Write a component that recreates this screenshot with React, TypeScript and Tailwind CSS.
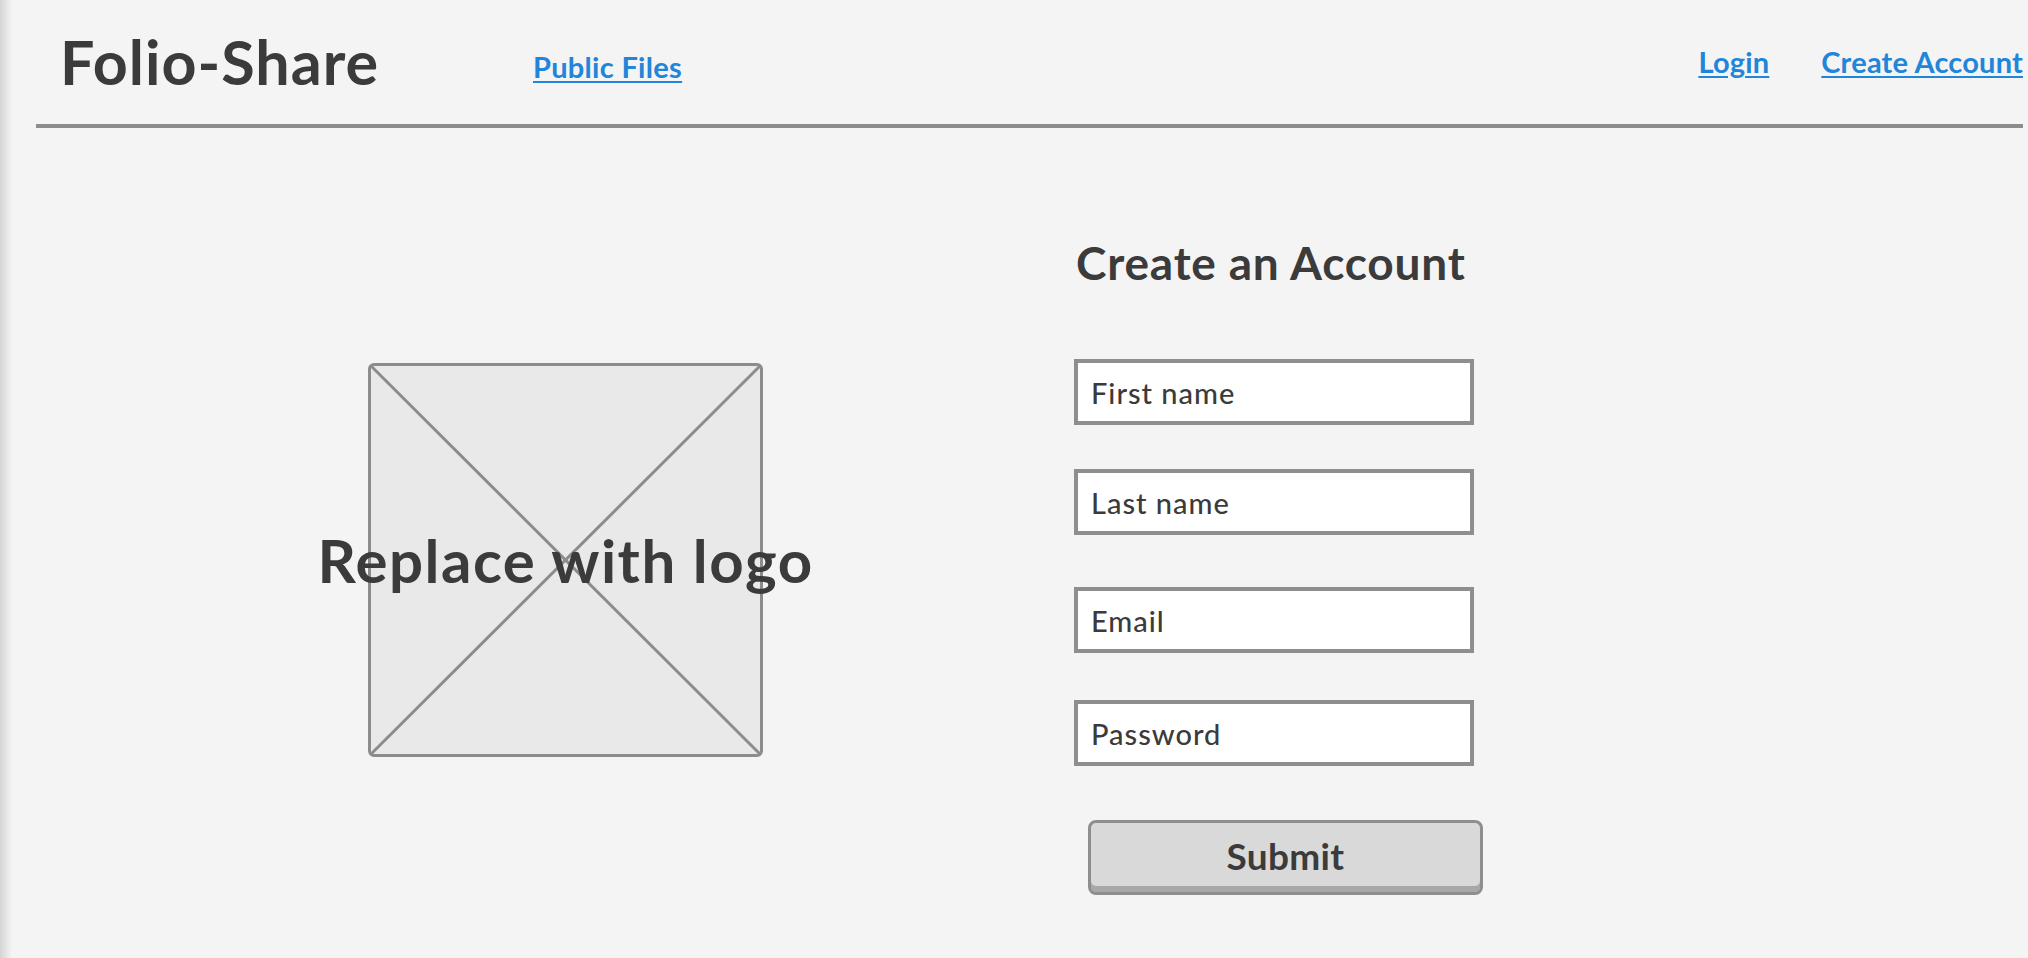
import React from "react";

const font = { fontFamily: "Lato, 'Open Sans', sans-serif" };

function Field({ label, className = "" }: { label: string; className?: string }) {
  return (
    <input
      type="text"
      placeholder={label}
      className={`block w-[400px] h-[66px] bg-white border-[4px] border-[#8e8e8e] pl-[13px] text-[29px] font-medium tracking-[1px] text-[#3b3b3b] placeholder:text-[#3b3b3b] outline-none ${className}`}
    />
  );
}

export default function App() {
  return (
    <div className="min-h-screen flex bg-[#f4f4f4] text-[#3b3b3b]" style={font}>
      <div className="w-[12px] shrink-0 bg-gradient-to-r from-[#d4d4d4] to-[#f4f4f4]" />
      <div className="flex-1 flex flex-col">
        <header className="ml-[24px] mr-[5px] h-[128px] border-b-[4px] border-[#8c8c8c] flex items-start">
          <h1 className="w-[497px] shrink-0 pl-[24px] mt-[31px] text-[61px] font-bold leading-none tracking-[1px]">
            Folio-Share
          </h1>
          <a href="#" className="mt-[52px] text-[29px] font-bold leading-none tracking-[0.3px] text-[#2185d9] underline underline-offset-[3px]">
            Public Files
          </a>
          <nav className="ml-auto mt-[47px] flex gap-[52px]">
            <a href="#" className="text-[29px] font-bold leading-none tracking-[0.2px] text-[#2185d9] underline underline-offset-[3px]">
              Login
            </a>
            <a href="#" className="text-[29px] font-bold leading-none tracking-[0.2px] text-[#2185d9] underline underline-offset-[3px]">
              Create Account
            </a>
          </nav>
        </header>

        <main className="flex items-start pl-[356px]">
          <div className="relative mt-[235px] w-[395px] h-[394px] border-[3px] border-[#8c8c8c] rounded-[6px] bg-[#e9e9e9] flex items-center justify-center">
            <svg className="absolute inset-0 w-full h-full" viewBox="0 0 100 100" preserveAspectRatio="none">
              <line x1="0" y1="0" x2="100" y2="100" stroke="#8c8c8c" strokeWidth="3" vectorEffect="non-scaling-stroke" />
              <line x1="100" y1="0" x2="0" y2="100" stroke="#8c8c8c" strokeWidth="3" vectorEffect="non-scaling-stroke" />
            </svg>
            <span className="relative whitespace-nowrap text-[60px] font-bold leading-none tracking-[1.5px]">
              Replace with logo
            </span>
          </div>

          <div className="ml-[311px] mt-[112px] flex flex-col">
            <h2 className="ml-[2px] text-[46px] font-bold leading-none tracking-[0.8px]">Create an Account</h2>
            <Field label="First name" className="mt-[73px]" />
            <Field label="Last name" className="mt-[44px]" />
            <Field label="Email" className="mt-[52px]" />
            <Field label="Password" className="mt-[47px]" />
            <button className="mt-[54px] ml-[14px] w-[395px] h-[75px] border-[3px] border-[#8e8e8e] rounded-[8px] bg-[#d9d9d9] shadow-[inset_0_-6px_0_#a8a8a8] text-[37px] font-bold leading-none tracking-[0.3px] text-[#3b3b3b] pb-[4px]">
              Submit
            </button>
          </div>
        </main>
      </div>
    </div>
  );
}
